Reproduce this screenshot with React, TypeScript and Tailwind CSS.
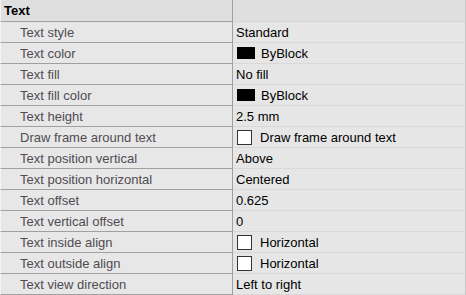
import React from 'react';

type Row = {
  label: string;
  value: string;
  kind?: 'swatch' | 'check';
};

const rows: Row[] = [
  { label: 'Text style', value: 'Standard' },
  { label: 'Text color', value: 'ByBlock', kind: 'swatch' },
  { label: 'Text fill', value: 'No fill' },
  { label: 'Text fill color', value: 'ByBlock', kind: 'swatch' },
  { label: 'Text height', value: '2.5 mm' },
  { label: 'Draw frame around text', value: 'Draw frame around text', kind: 'check' },
  { label: 'Text position vertical', value: 'Above' },
  { label: 'Text position horizontal', value: 'Centered' },
  { label: 'Text offset', value: '0.625' },
  { label: 'Text vertical offset', value: '0' },
  { label: 'Text inside align', value: 'Horizontal', kind: 'check' },
  { label: 'Text outside align', value: 'Horizontal', kind: 'check' },
  { label: 'Text view direction', value: 'Left to right' },
];

const PropRow = ({ row }: { row: Row }) => (
  <div className="flex h-[21px]">
    <div className="w-[233px] shrink-0 flex items-center pl-[19px] bg-[#e7e7e7] border-l border-r border-b border-[#a0a0a0] border-l-[#f3f3f3] text-[#4f4c52]">
      {row.label}
    </div>
    <div className="flex-1 flex items-center pl-[3px] bg-[#e6e6e6] border-b border-[#d9d9d9] text-black">
      {row.kind === 'swatch' && <span className="w-[18px] h-[12px] bg-black mr-[6px] ml-[1px]" />}
      {row.kind === 'check' && (
        <span className="w-[15px] h-[15px] bg-white border border-[#333] mr-[8px] ml-[1px]" />
      )}
      {row.value}
    </div>
  </div>
);

export default function App() {
  return (
    <div
      className="w-[466px] h-[295px] overflow-hidden bg-[#e6e6e6] border-r border-[#c8c8c8] text-[13px] leading-none"
      style={{ fontFamily: '"Liberation Sans", Arial, sans-serif' }}
    >
      <div className="flex h-[22px]">
        <div className="w-[233px] shrink-0 flex items-center pl-[3px] bg-[#dfdfdf] border-l border-r border-b border-[#a0a0a0] border-l-[#f3f3f3] font-bold text-black">
          Text
        </div>
        <div className="flex-1 bg-[#dfdfdf] border-b border-[#d6d6d6]" />
      </div>
      {rows.map((r) => (
        <PropRow key={r.label} row={r} />
      ))}
    </div>
  );
}
